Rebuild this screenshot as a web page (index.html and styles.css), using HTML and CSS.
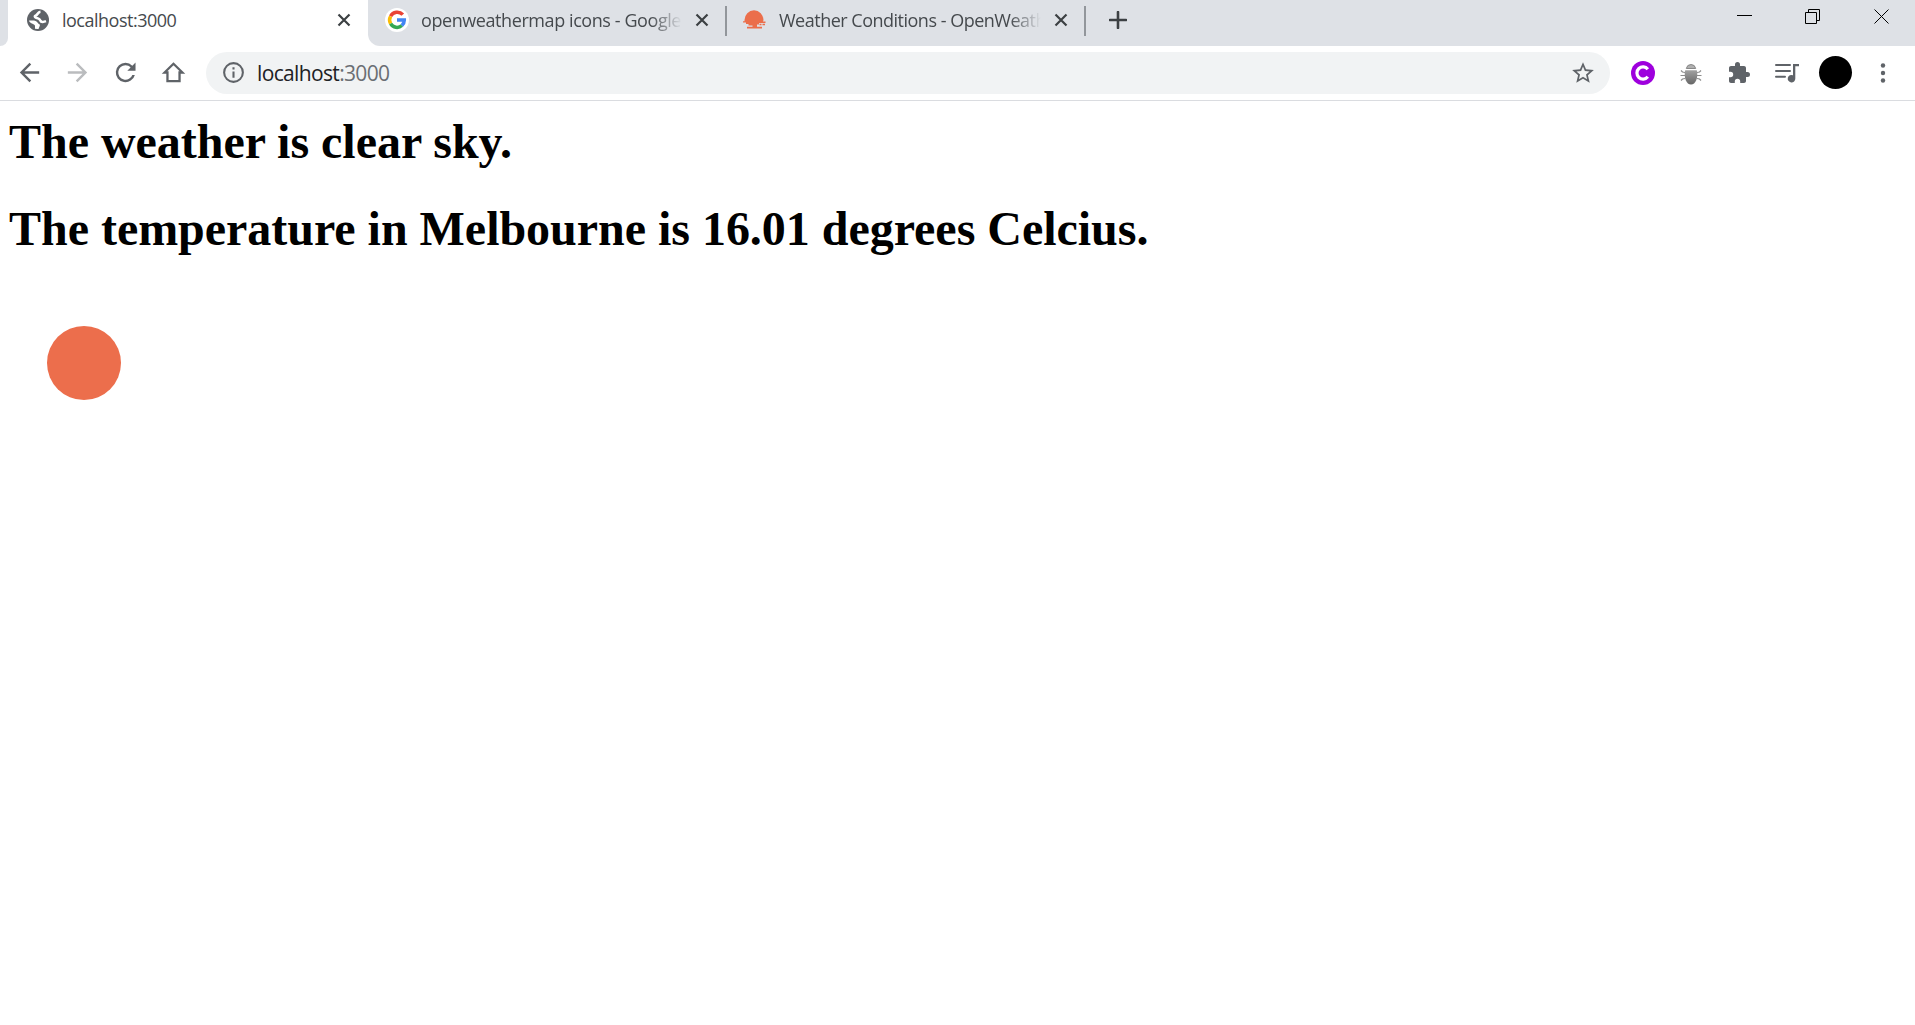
FILE: index.html
```html
<!DOCTYPE html>
<html lang="en">
<head>
<meta charset="utf-8">
<title>localhost:3000</title>
<link rel="stylesheet" href="styles.css">
</head>
<body>
<header class="tabstrip">
  <div class="strip-edge"></div>
  <div class="tab tab-active">
    <svg class="favicon" viewBox="0 0 24 24"><circle cx="12" cy="12" r="11" fill="#5f6368"/><path d="M14.500 3.800C11.500 4 12 6.800 9.800 7.500C8.300 8 8.500 9.300 10 9.700C12.500 10.300 13.800 10.800 14.300 12.500C15 14.500 18 14 20 13.200" fill="none" stroke="#fff" stroke-width="2.500"/><path d="M3 12.500H8C10.500 12.800 11.500 14.500 12.500 15.800C14 16.300 14.300 17.200 13.500 18.500L12.500 21C11 21.200 9.500 20.800 9 20.500V18C9 16.800 7.800 16.500 6.500 15.800C5 15 3.300 14.500 3 12.500Z" fill="#fff"/></svg>
    <span class="tab-title title-local">localhost:3000</span>
    <svg class="close" viewBox="0 0 14 14"><path d="M1.500 1.500l11 11M12.500 1.500l-11 11"/></svg>
  </div>
  <div class="strip-rest">
    <div class="tab">
      <svg class="favicon" viewBox="0 0 24 24"><circle cx="12" cy="12" r="12" fill="#fff"/><g fill="none" stroke-width="3.500"><path d="M17.800 6.700A7.400 7.400 0 0 0 5.600 8.300" stroke="#ea4335"/><path d="M5.600 8.300A7.400 7.400 0 0 0 5.600 15.700" stroke="#fbbc05"/><path d="M5.600 15.700A7.400 7.400 0 0 0 16.900 17.500" stroke="#34a853"/><path d="M16.900 17.500A7.400 7.400 0 0 0 19.300 12H12" stroke="#4285f4"/></g></svg>
      <span class="tab-title title-google">openweathermap icons - Google</span>
      <svg class="close" viewBox="0 0 14 14"><path d="M1.500 1.500l11 11M12.500 1.500l-11 11"/></svg>
    </div>
    <div class="separator"></div>
    <div class="tab tab-weather">
      <svg class="favicon" viewBox="0 0 24 24"><path d="M1.500 12A9.500 9.700 0 1 1 20.500 12L20 13.500H22.500V15H16V16.500H14V18.700H19V20.500H4V18.700H9.500V17.500H5.500V16H3V14.500H0V13.200H1.500Z" fill="#eb6e4b"/><path d="M16.500 16.500h2M19.500 16.500h2.500" stroke="#eb6e4b" stroke-width="1.300"/></svg>
      <span class="tab-title title-weather">Weather Conditions - OpenWeath</span>
      <svg class="close" viewBox="0 0 14 14"><path d="M1.500 1.500l11 11M12.500 1.500l-11 11"/></svg>
    </div>
    <div class="separator"></div>
    <svg class="new-tab" viewBox="0 0 18 18"><path d="M9 1v16M1 9h16"/></svg>
    <div class="window-buttons">
      <svg viewBox="0 0 16 16"><path d="M1 6.500h15"/></svg>
      <svg viewBox="0 0 16 16"><path d="M.5 3.500h11v11h-11zM3.500 3.500v-3h11v11h-3"/></svg>
      <svg viewBox="0 0 16 16"><path d="M.5.5l14 14M14.500.5l-14 14"/></svg>
    </div>
  </div>
</header>
<nav class="toolbar">
  <div class="tool"><svg class="icon" viewBox="0 0 24 24"><path d="M20 11H7.830l5.590-5.590L12 4l-8 8 8 8 1.410-1.410L7.830 13H20v-2z"/></svg></div>
  <div class="tool disabled"><svg class="icon" viewBox="0 0 24 24"><path d="M12 4l-1.410 1.410L16.170 11H4v2h12.170l-5.580 5.590L12 20l8-8z"/></svg></div>
  <div class="tool"><svg class="icon" viewBox="0 0 24 24"><path d="M17.650 6.350A7.960 7.960 0 0 0 12 4a8 8 0 1 0 7.730 10h-2.080A6 6 0 1 1 12 6c1.660 0 3.140.69 4.220 1.780L13.500 10.500H20.300V3.700z"/></svg></div>
  <div class="tool"><svg class="icon" viewBox="0 0 24 24"><path d="M12 4.800L4.600 12H7V19.100H17V12H19.400Z" fill="none" stroke="#5f6368" stroke-width="1.900"/></svg></div>
  <div class="omnibox">
    <svg class="info" viewBox="0 0 24 24"><path d="M11 7h2v2h-2zm0 4h2v6h-2zm1-9a10 10 0 1 0 0 20 10 10 0 0 0 0-20zm0 18a8 8 0 1 1 0-16 8 8 0 0 1 0 16z"/></svg>
    <span class="url">localhost<span class="port">:3000</span></span>
    <svg class="star" viewBox="0 0 24 24"><path d="M22 9.240l-7.190-.62L12 2 9.190 8.630 2 9.240l5.460 4.730L5.820 21 12 17.270 18.180 21l-1.630-7.030L22 9.240zM12 15.400l-3.760 2.270 1-4.280-3.320-2.880 4.380-.38L12 6.100l1.710 4.040 4.380.38-3.320 2.880 1 4.280L12 15.400z"/></svg>
  </div>
  <div class="tool"><svg class="ext" viewBox="0 0 24 24"><circle cx="12" cy="12" r="12" fill="#9e00dd"/><path d="M16.800 8.200A6.100 6.100 0 1 0 16.800 15.800" fill="none" stroke="#fff" stroke-width="3.200"/></svg></div>
  <div class="tool"><svg class="ext" viewBox="0 0 24 24"><defs><linearGradient id="shell" x2="0" y2="1"><stop stop-color="#a2a2a2"/><stop offset="1" stop-color="#666"/></linearGradient></defs><path d="M6 11.500L3.500 11L2 9.500M6 14.500H1.500M6 17.500L3.500 18L2 19.500M18 11.500l2.500-.5L22 9.500M18 14.500h4.500M18 17.500l2.500.5L22 19.500" stroke="#8c8c8c" stroke-width="1.200" fill="none"/><path d="M7.300 7.500A4.800 5 0 0 1 16.700 7.500Z" fill="#b0b0b0" stroke="#888" stroke-width="1"/><path d="M6.200 9.200H17.800C19.500 17 16.500 23.500 12 23.500S4.500 17 6.200 9.200Z" fill="url(#shell)"/></svg></div>
  <div class="tool"><svg class="ext puzzle" viewBox="0 0 24 24"><path d="M20.500 11H19V7c0-1.100-.9-2-2-2h-4V3.500a2.500 2.500 0 0 0-5 0V5H4c-1.100 0-2 .9-2 2v3.800h1.500a2.700 2.700 0 0 1 0 5.400H2V20c0 1.100.9 2 2 2h3.800v-1.500a2.700 2.700 0 0 1 5.400 0V22H17c1.100 0 2-.9 2-2v-4h1.500a2.500 2.500 0 0 0 0-5z"/></svg></div>
  <div class="tool"><svg class="ext" viewBox="0 0 24 24"><path d="M1 4h14M1 10h14M1 15.800h9" stroke="#5f6368" stroke-width="2" stroke-linecap="round"/><path d="M18 3h6v2.300h-3.700V17.500A3.800 3.800 0 1 1 18 14.200z"/></svg></div>
  <div class="tool"><div class="avatar"></div></div>
  <div class="tool"><svg class="ext" viewBox="0 0 24 24"><circle cx="12" cy="4.500" r="2.200"/><circle cx="12" cy="12" r="2.200"/><circle cx="12" cy="19.500" r="2.200"/></svg></div>
</nav>
<main class="page">
  <h1 class="line">The weather is clear sky.</h1>
  <h1 class="line">The temperature in Melbourne is 16.01 degrees Celcius.</h1>
  <svg class="sun" viewBox="0 0 150 150"><circle cx="75" cy="75" r="37"/></svg>
</main>
</body>
</html>
```
FILE: styles.css
```css
* { box-sizing: border-box; }
body { margin: 0; height: 1025px; background: #fff; overflow: hidden; font-family: "Open Sans", sans-serif; }
svg { display: block; flex: none; }

.tabstrip { display: flex; height: 46px; background: #fff; }
.strip-edge { width: 8px; background: #dee1e6; border-radius: 0 0 10px 0; }
.strip-rest { flex: 1; display: flex; background: #dee1e6; border-radius: 0 0 0 12px; }
.tab { display: flex; align-items: center; width: 357px; height: 40px; padding-left: 17px; }
.tab-active { width: 360px; padding-left: 18px; }
.tab-weather { padding-left: 16px; }
.favicon { width: 24px; height: 24px; }
.tab-title { width: 262px; margin: 0 0 1px 12px; font-size: 18px; letter-spacing: -0.5px; line-height: 24px; color: #45494d; white-space: nowrap; }
.title-google, .title-weather { -webkit-mask-image: linear-gradient(to right, #000 88%, transparent); mask-image: linear-gradient(to right, #000 88%, transparent); }
.title-google { width: 261px; letter-spacing: -0.42px; }
.close { width: 14px; height: 14px; margin-left: 13px; fill: none; stroke: #3c4043; stroke-width: 2.2; }
.separator { width: 2px; height: 30px; margin-top: 6px; background: #92969b; }
.new-tab { width: 18px; height: 18px; margin: 11px 0 0 23px; fill: none; stroke: #3c4043; stroke-width: 2.6; stroke-linecap: round; }
.window-buttons { display: flex; gap: 53px; margin: 9px 25px 0 auto; }
.window-buttons svg { width: 16px; height: 16px; fill: none; stroke: #000; stroke-width: 1; }

.toolbar { display: flex; align-items: center; height: 55px; padding: 0 8px 1px 5px; border-bottom: 1px solid #dadce0; fill: #5f6368; }
.tool { display: flex; justify-content: center; width: 48px; }
.disabled { fill: #babcbe; }
.icon { width: 29px; height: 29px; margin-bottom: 1px; }
.omnibox { flex: 1; display: flex; align-items: center; height: 42px; margin: 0 9px; padding: 0 14px 0 15px; border-radius: 21px; background: #f1f3f4; }
.info { width: 25px; height: 25px; }
.url { flex: 1; margin-left: 11px; font-size: 21px; letter-spacing: -0.65px; line-height: 28px; color: #202124; }
.port { color: #6a6e73; }
.star { width: 26px; height: 26px; }
.ext { width: 24px; height: 24px; }
.avatar { width: 33px; height: 33px; border-radius: 50%; background: #000; }

.page { padding: 13px 9px; font-family: "Liberation Serif", "Times New Roman", serif; }
.line { margin: 0 0 32px; font-size: 48px; line-height: 55px; letter-spacing: -0.025px; white-space: nowrap; color: #000; }
.sun { width: 150px; height: 150px; fill: #ec6e4c; }
```
